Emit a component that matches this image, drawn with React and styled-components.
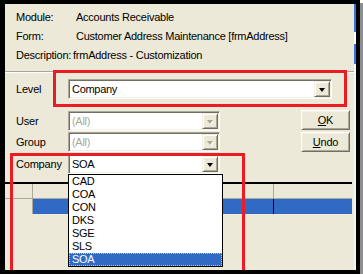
import React from "react";
import styled, { createGlobalStyle } from "styled-components";

const Global = createGlobalStyle`
  html, body { margin: 0; padding: 0; background: #ffffff; }
  body { font-family: "Liberation Sans", Arial, sans-serif; font-size: 11px; color: #000; }
  * { box-sizing: border-box; }
`;

const Frame = styled.div`
  position: relative;
  width: 360px;
  height: 274px;
  border-style: solid;
  border-color: #000;
  border-width: 4px 4px 4px 5px;
  background: #ece9d8;
  box-shadow: 3px 3px 0 #8e8e8e;
  overflow: hidden;
  display: flex;
`;

const Main = styled.div`
  flex: 1;
  display: flex;
  flex-direction: column;
  min-width: 0;
`;

const EdgeStrip = styled.div`
  width: 2px;
  background: linear-gradient(
    to bottom,
    #3d6fd8 0 28px,
    #ffffff 28px 40px,
    #3d6fd8 40px 60px,
    #f6f6f2 60px 100%
  );
`;

const Info = styled.div`
  padding: 3px 0 0 11px;
  display: flex;
  flex-direction: column;
`;

const InfoRow = styled.div`
  height: 19px;
  display: flex;
  align-items: center;
  letter-spacing: -0.25px;
  white-space: nowrap;
`;

const InfoLabel = styled.span`
  width: ${(p) => p.$w || 60}px;
  flex: none;
`;

const Separator = styled.div`
  margin-top: 7px;
  border-top: 1px solid #aca899;
  border-bottom: 1px solid #ffffff;
`;

const FieldRow = styled.div`
  display: flex;
  align-items: center;
  height: 20px;
  margin-top: ${(p) => p.$mt || 0}px;
  position: relative;
`;

const FieldLabel = styled.span`
  width: ${(p) => p.$w}px;
  flex: none;
  letter-spacing: -0.2px;
`;

const LevelArea = styled.div`
  margin-top: 6px;
  padding-left: 11px;
`;

const Combo = styled.div`
  position: relative;
  width: ${(p) => p.$w}px;
  height: 20px;
  border: 1px solid;
  border-color: #aca899 #ffffff #ffffff #aca899;
  box-shadow: inset 1px 1px 0 #716f64, inset -1px -1px 0 #f1efe2;
  padding: 1px;
  background: #ffffff;
  display: flex;
  align-items: stretch;
`;

const ComboValue = styled.div`
  flex: 1;
  display: flex;
  align-items: center;
  padding-left: 2px;
  letter-spacing: -0.3px;
  color: ${(p) => (p.$disabled ? "#aca899" : "#000")};
`;

const DropButton = styled.div`
  width: 16px;
  flex: none;
  background: #ece9d8;
  border: 1px solid;
  border-color: #f1efe2 #716f64 #716f64 #f1efe2;
  box-shadow: inset 1px 1px 0 #ffffff, inset -1px -1px 0 #aca899;
  display: flex;
  align-items: center;
  justify-content: center;
`;

const Arrow = styled.span`
  width: 0;
  height: 0;
  border-left: 3.5px solid transparent;
  border-right: 3.5px solid transparent;
  border-top: 4px solid ${(p) => (p.$disabled ? "#aca899" : "#000")};
  margin-top: 1px;
  filter: ${(p) => (p.$disabled ? "drop-shadow(1px 1px 0 #fff)" : "none")};
`;

const Controls = styled.div`
  margin-top: 11px;
  padding: 0 4px 0 11px;
  display: flex;
  justify-content: space-between;
  align-items: flex-start;
`;

const LeftColumn = styled.div`
  display: flex;
  flex-direction: column;
  padding-top: 1px;
`;

const ButtonColumn = styled.div`
  display: flex;
  flex-direction: column;
  gap: 2px;
`;

const PushButton = styled.div`
  width: 49px;
  height: 20px;
  background: #ece9d8;
  border: 1px solid;
  border-color: #ffffff #716f64 #716f64 #ffffff;
  box-shadow: inset 1px 1px 0 #f1efe2, inset -1px -1px 0 #aca899;
  display: flex;
  align-items: center;
  justify-content: center;
  letter-spacing: -0.2px;
  u { text-decoration: underline; text-underline-offset: 1px; }
`;

const DropList = styled.div`
  position: absolute;
  left: -1px;
  top: calc(100% + 1px);
  width: 155px;
  border: 1px solid #000;
  background: #ffffff;
  z-index: 5;
`;

const ListItem = styled.div`
  height: 13px;
  line-height: 11px;
  padding-left: 2px;
  letter-spacing: -0.3px;
  border: 1px ${(p) => (p.$selected ? "dotted #f2c36c" : "solid transparent")};
  background: ${(p) => (p.$selected ? "#316ac5" : "transparent")};
  color: ${(p) => (p.$selected ? "#ffffff" : "#000")};
`;

const Grid = styled.div`
  margin: 8px 2px 0 0;
  border-top: 2px solid #000;
  display: flex;
  flex-direction: column;
`;

const GridRow = styled.div`
  display: flex;
  height: ${(p) => p.$h}px;
  border-bottom: ${(p) => (p.$line ? "1px solid #aca899" : "none")};
`;

const GridCell = styled.div`
  width: ${(p) => (p.$w ? `${p.$w}px` : "auto")};
  flex: ${(p) => (p.$w ? "none" : "1")};
  background: ${(p) => (p.$blue ? "#316ac5" : "#ece9d8")};
  border-right: ${(p) => (p.$sep ? `1px solid ${p.$sep}` : "none")};
`;

const RedBox = styled.div`
  position: absolute;
  left: ${(p) => p.$x}px;
  top: ${(p) => p.$y}px;
  width: ${(p) => p.$w}px;
  height: ${(p) => p.$h}px;
  border: 3px solid #ec1c24;
  pointer-events: none;
  z-index: 10;
`;

const companies = ["CAD", "COA", "CON", "DKS", "SGE", "SLS", "SOA"];

function ComboBox({ width, value, disabled, children }) {
  return (
    <Combo $w={width}>
      <ComboValue $disabled={disabled}>{value}</ComboValue>
      <DropButton>
        <Arrow $disabled={disabled} />
      </DropButton>
      {children}
    </Combo>
  );
}

export default function App() {
  return (
    <>
      <Global />
      <Frame>
        <Main>
          <Info>
            <InfoRow>
              <InfoLabel>Module:</InfoLabel>
              <span>Accounts Receivable</span>
            </InfoRow>
            <InfoRow>
              <InfoLabel>Form:</InfoLabel>
              <span>Customer Address Maintenance [frmAddress]</span>
            </InfoRow>
            <InfoRow>
              <InfoLabel $w={57}>Description:</InfoLabel>
              <span>frmAddress - Customization</span>
            </InfoRow>
          </Info>
          <Separator />
          <LevelArea>
            <FieldRow>
              <FieldLabel $w={52}>Level</FieldLabel>
              <ComboBox width={264} value="Company" />
            </FieldRow>
          </LevelArea>
          <Controls>
            <LeftColumn>
              <FieldRow>
                <FieldLabel $w={52}>User</FieldLabel>
                <ComboBox width={152} value="(All)" disabled />
              </FieldRow>
              <FieldRow $mt={1}>
                <FieldLabel $w={52}>Group</FieldLabel>
                <ComboBox width={152} value="(All)" disabled />
              </FieldRow>
              <FieldRow $mt={2}>
                <FieldLabel $w={52}>Company</FieldLabel>
                <ComboBox width={152} value="SOA">
                  <DropList>
                    {companies.map((c) => (
                      <ListItem key={c} $selected={c === "SOA"}>
                        {c}
                      </ListItem>
                    ))}
                  </DropList>
                </ComboBox>
              </FieldRow>
            </LeftColumn>
            <ButtonColumn>
              <PushButton>
                <span>
                  <u>O</u>K
                </span>
              </PushButton>
              <PushButton>
                <span>
                  <u>U</u>ndo
                </span>
              </PushButton>
            </ButtonColumn>
          </Controls>
          <Grid>
            <GridRow $h={15} $line>
              <GridCell $w={28} $sep="#aca899" />
              <GridCell $w={241} $sep="#aca899" />
              <GridCell />
            </GridRow>
            <GridRow $h={15}>
              <GridCell $w={28} $sep="#aca899" />
              <GridCell $w={241} $blue $sep="#000" />
              <GridCell $blue />
            </GridRow>
          </Grid>
        </Main>
        <EdgeStrip />
        <RedBox $x={48} $y={66} $w={294} $h={37} />
        <RedBox $x={5} $y={149} $w={235} $h={200} />
      </Frame>
    </>
  );
}
